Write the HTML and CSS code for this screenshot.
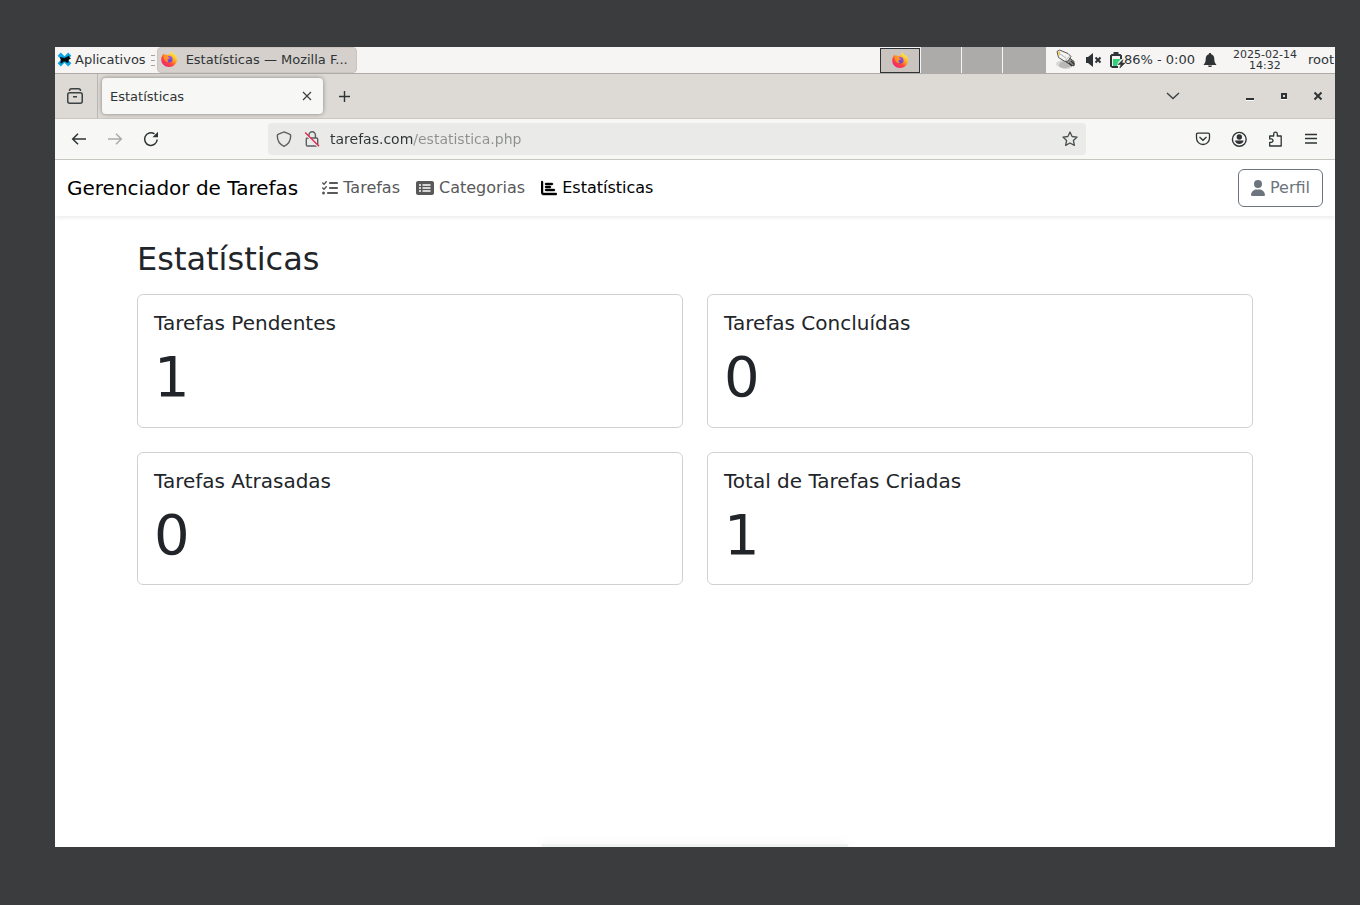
FILE: index.html
```html
<!DOCTYPE html>
<html lang="pt-BR">
<head>
<meta charset="utf-8">
<title>Estatísticas</title>
<link rel="stylesheet" href="styles.css">
</head>
<body>
<svg class="defs" aria-hidden="true">
  <defs>
    <linearGradient id="ff-body" x1="0.85" y1="0.1" x2="0.2" y2="0.95">
      <stop offset="0.1" stop-color="#ffe63c"/><stop offset="0.4" stop-color="#ffa022"/><stop offset="0.65" stop-color="#ff4a3c"/><stop offset="1" stop-color="#f0207a"/>
    </linearGradient>
    <linearGradient id="ff-core" x1="0.7" y1="0" x2="0.3" y2="1">
      <stop offset="0" stop-color="#a050e8"/><stop offset="1" stop-color="#5b44c4"/>
    </linearGradient>
    <symbol id="firefox" viewBox="0 0 16 16">
      <path fill="url(#ff-body)" d="M10 .2c1 .6 1.5 1.4 1.8 2.3.7.3 1 .8 1.3 1.4.1-.3 0-.7 0-1C15 4.300 16 6.300 16 8.500 16 12.800 12.500 16 8.100 16 3.700 16 .2 12.700.2 8.500c0-2 .7-3.500 1.500-4.500 0-.7.2-1.200.5-1.600.3.600.8.900 1.300 1.200 1.500-.400 2.300 0 3.200.6C8 3.700 9.600 2.700 10 .2z"/>
      <circle cx="8.200" cy="8.300" r="3.300" fill="url(#ff-core)"/>
      <path fill="#ff9425" d="M2.500 5.200c1.200-1 2.900-1.200 4.200-.6.500 0 1-.1 1.400-.1-.8.500-1.300 1-1.300 1.600.5.500 1.300.4 2 .8-.4.900-1.800 1-2.200 1.700-.3.900.3 1.900 1.300 2.400-2.400.4-4.600-1.200-5.400-5.800z"/>
    </symbol>
  </defs>
</svg>

<div class="screen">
  <header class="panel">
    <button class="apps" type="button">
      <svg width="15" height="15" viewBox="0 0 15 15" aria-hidden="true"><path d="M2.200 2.200l10.600 10.600M12.800 2.200L2.200 12.800" stroke="#0aa5e2" stroke-width="4.500"/><path d="M3 5l4.500 1 3.500-1.700.6-1 .9 1.900 1.500 1.200-2.300 1.400-.2 2.900H9.800L8.500 9.500 6 9.800l-.8 1.400H3.500l.3-3z" fill="#06090c"/></svg>
      Aplicativos
    </button>
    <span class="handle"></span>
    <button class="task" type="button">
      <svg class="icon16" aria-hidden="true"><use href="#firefox"/></svg>
      Estatísticas — Mozilla F...
    </button>
    <div class="pager">
      <button class="desk desk-active" type="button" aria-label="Área de trabalho 1"><svg class="icon16" aria-hidden="true"><use href="#firefox"/></svg></button>
      <button class="desk" type="button" aria-label="Área de trabalho 2"></button>
      <button class="desk" type="button" aria-label="Área de trabalho 3"></button>
      <button class="desk desk-last" type="button" aria-label="Área de trabalho 4"></button>
    </div>
    <div class="tray">
      <svg width="22" height="22" viewBox="0 0 22 22" aria-hidden="true"><ellipse cx="9" cy="15" rx="8" ry="4" fill="#000" opacity=".12"/><ellipse cx="11" cy="16" rx="7" ry="4" fill="#000" opacity=".14"/><path d="M12 10l2-1.500 5 4V17l-3-1-5-3z" fill="#8d8d8b" stroke="#4a4d49"/><path d="M14 14l3 3M16 12l3.500 3.500" stroke="#333" stroke-width="1.200"/><path d="M2 2.500L4.500 1 13 4.500l3 3-3 4.500-3 .5-6.500-4z" fill="#f2f2f0" stroke="#555753"/><path d="M10 11.500L14.500 7.500M5 5l6 4" stroke="#b5b5b2" fill="none"/><path d="M3 3.500L5 2v3l-1 2z" fill="#f4c04a"/></svg>
      <svg width="16" height="16" viewBox="0 0 16 16" aria-hidden="true"><path d="M1 5h2l5-4v14l-5-4H1z" fill="#2e3436"/><path d="M10.500 5.500l5 5M15.500 5.500l-5 5" stroke="#2e3436" stroke-width="2"/></svg>
      <span class="battery">
        <svg width="16" height="16" viewBox="0 0 16 16" aria-hidden="true"><path d="M3 7v7h4l1-3.500L11 7z" fill="#33d17a"/><path d="M8 15H2.500L1 14V4l1-1h8l1 1v3" fill="none" stroke="#2e3436" stroke-width="2"/><path d="M3.500 0h5v3h-5z" fill="#2e3436"/><path d="M13 7.500L8 12.500h3L9.500 16.500l5.500-5.500h-3z" fill="#2e3436" stroke="#2e3436" stroke-width=".5"/></svg>
        <span>86% - 0:00</span>
      </span>
      <svg width="14" height="16" viewBox="0 0 14 16" aria-hidden="true"><path d="M7 1c.8 0 1.200.5 1.200 1.200C10.500 2.800 11.300 5 11.300 7c0 3 .7 4 2 5.500V13H.7v-.5C2 11 2.700 10 2.700 7c0-2 .8-4.200 3.100-4.800C5.800 1.500 6.200 1 7 1zM5 13.500h4c0 1-1 1.500-2 1.500s-2-.5-2-1.500z" fill="#2e3436"/></svg>
      <time class="clock" datetime="2025-02-14T14:32">2025-02-14<br>14:32</time>
      <span>root</span>
    </div>
  </header>

  <div class="tabbar">
    <button class="view" type="button" aria-label="Firefox View"><svg width="18" height="18" viewBox="0 0 18 18" aria-hidden="true"><rect x="1.750" y="5.750" width="14.500" height="10.500" rx="2" fill="none" stroke="#3b4042" stroke-width="1.500"/><path d="M3.500 4C3.500 2.500 4 1.800 5.500 1.800h7c1.500 0 2 .7 2 2.200M7 9.700h4" fill="none" stroke="#3b4042" stroke-width="1.500"/></svg></button>
    <div class="tab">
      <span>Estatísticas</span>
      <button class="tab-close" type="button" aria-label="Fechar aba"><svg width="10" height="10" viewBox="0 0 10 10" aria-hidden="true"><path d="M1 1l8 8M9 1l-8 8" stroke="#3b4042" stroke-width="1.200"/></svg></button>
    </div>
    <button class="newtab" type="button" aria-label="Nova aba"><svg width="13" height="13" viewBox="0 0 13 13" aria-hidden="true"><path d="M6.500 1v11M1 6.500h11" stroke="#2e3436" stroke-width="1.400"/></svg></button>
    <button class="alltabs" type="button" aria-label="Listar abas"><svg width="14" height="8" viewBox="0 0 14 8" aria-hidden="true"><path d="M1 1l6 5.500L13 1" fill="none" stroke="#3b4042" stroke-width="1.400"/></svg></button>
    <div class="winbuttons">
      <button type="button" aria-label="Minimizar"><svg width="10" height="10" viewBox="0 0 10 10" aria-hidden="true"><path d="M1 7h8v2H1z" fill="#2e3436"/><path d="M1 9h8v1H1z" fill="#fff"/></svg></button>
      <button type="button" aria-label="Restaurar"><svg width="10" height="10" viewBox="0 0 10 10" aria-hidden="true"><path d="M3 3h4v4H3z" fill="none" stroke="#2e3436" stroke-width="2"/><path d="M2 8h6v1H2z" fill="#fff"/></svg></button>
      <button type="button" aria-label="Fechar"><svg width="10" height="10" viewBox="0 0 10 10" aria-hidden="true"><path d="M1.500 1.500l7 7M8.500 1.500l-7 7" stroke="#2e3436" stroke-width="2"/></svg></button>
    </div>
  </div>

  <div class="toolbar">
    <div class="tools">
      <button type="button" aria-label="Voltar"><svg width="16" height="16" viewBox="0 0 16 16" aria-hidden="true"><path d="M15 8H2M7 2.700L1.700 8 7 13.300" fill="none" stroke="#2e3436" stroke-width="1.500"/></svg></button>
      <button type="button" aria-label="Avançar" disabled><svg width="16" height="16" viewBox="0 0 16 16" aria-hidden="true"><path d="M1 8h13M9 2.700L14.300 8 9 13.300" fill="none" stroke="#aaacac" stroke-width="1.500"/></svg></button>
      <button type="button" aria-label="Recarregar"><svg width="16" height="16" viewBox="0 0 16 16" aria-hidden="true"><path d="M14.200 8.500A6.300 6.300 0 1 1 11.500 2.900" fill="none" stroke="#2e3436" stroke-width="1.500"/><path d="M15 .8v5.500H9.500z" fill="#2e3436"/></svg></button>
    </div>
    <div class="urlbar">
      <svg width="16" height="16" viewBox="0 0 16 16" aria-hidden="true"><path d="M8 .9l5.500 2.300c.8.300 1.200.8 1.200 1.600 0 5-2.200 8.500-6.700 10.500C3.500 13.300 1.300 9.800 1.300 4.800c0-.8.400-1.300 1.200-1.600z" fill="none" stroke="#5a5f61" stroke-width="1.400"/></svg>
      <svg width="16" height="16" viewBox="0 0 16 16" aria-hidden="true"><path d="M5 7V4a3.200 3.200 0 0 1 6.400 0v3M3.500 7h9c.8 0 1.200.4 1.200 1.200v5.600c0 .8-.4 1.200-1.200 1.200h-9c-.8 0-1.200-.4-1.200-1.200V8.200C2.300 7.400 2.700 7 3.500 7z" fill="none" stroke="#5a5f61" stroke-width="1.400"/><path d="M1.200 2.500l13.500 13.500" stroke="#ececeb" stroke-width="2"/><path d="M1.200 1.500L15 15.300" stroke="#e22850" stroke-width="1.400"/></svg>
      <input class="url" type="text" aria-label="Endereço" value="tarefas.com/estatistica.php" spellcheck="false">
      <button type="button" aria-label="Adicionar aos favoritos"><svg width="16" height="16" viewBox="0 0 16 16" aria-hidden="true"><path d="M8 1l2.100 4.500 5 .6-3.700 3.400 1 4.900L8 12l-4.400 2.400 1-4.900L.9 6.100l5-.6z" fill="none" stroke="#4a4f51" stroke-width="1.300" stroke-linejoin="round"/></svg></button>
    </div>
    <div class="tools tools-end">
      <button type="button" aria-label="Pocket"><svg width="16" height="16" viewBox="0 0 16 16" aria-hidden="true"><path d="M2.800 2.200h10.400c.8 0 1.300.5 1.300 1.300V7a6.500 6.500 0 0 1-13 0V3.500c0-.8.500-1.300 1.300-1.300zM4.500 6L8 9.300 11.500 6" fill="none" stroke="#2e3436" stroke-width="1.300"/></svg></button>
      <button type="button" aria-label="Conta"><svg width="16" height="16" viewBox="0 0 16 16" aria-hidden="true"><circle cx="8.300" cy="8.300" r="6.900" fill="none" stroke="#2e3436" stroke-width="1.400"/><circle cx="8.300" cy="6" r="2.700" fill="#2e3436"/><path d="M4 9.500h8.600c-.3 2-2 3.500-4.300 3.500s-4-1.500-4.300-3.500z" fill="#2e3436"/></svg></button>
      <button type="button" aria-label="Extensões"><svg width="16" height="16" viewBox="0 0 16 16" aria-hidden="true"><path d="M2.700 6.500V5h4V3a1.800 1.800 0 0 1 3.600 0v2h3.900v10H2.700v-3.700h1.600a1.700 1.700 0 0 0 0-3.400H2.700z" fill="none" stroke="#2e3436" stroke-width="1.300" stroke-linejoin="round"/></svg></button>
      <button type="button" aria-label="Menu"><svg width="16" height="16" viewBox="0 0 16 16" aria-hidden="true"><path d="M2 3.500h12M2 7.500h12M2 12h12" stroke="#2e3436" stroke-width="1.300"/></svg></button>
    </div>
  </div>

  <div class="page">
    <nav class="navbar">
      <a class="brand" href="#">Gerenciador de Tarefas</a>
      <ul class="links">
        <li><a href="#"><svg width="16" height="16" viewBox="0 0 512 512" aria-hidden="true"><path fill="currentColor" d="M152.1 38.2c9.9 8.900 10.700 24 1.800 33.900l-72 80c-4.400 4.900-10.600 7.800-17.200 7.900s-12.900-2.400-17.600-7L7 113C-2.300 103.600-2.300 88.400 7 79s24.600-9.400 33.900 0l22.100 22.100 55.100-61.200c8.900-9.900 24-10.700 33.900-1.800zm0 160c9.900 8.900 10.700 24 1.800 33.900l-72 80c-4.400 4.900-10.600 7.800-17.200 7.900s-12.900-2.400-17.600-7L7 273c-9.400-9.400-9.400-24.600 0-33.900s24.600-9.400 33.900 0l22.100 22.100 55.100-61.200c8.900-9.900 24-10.700 33.900-1.800zM224 96c0-17.700 14.300-32 32-32H480c17.700 0 32 14.300 32 32s-14.300 32-32 32H256c-17.700 0-32-14.300-32-32zm0 160c0-17.700 14.300-32 32-32H480c17.700 0 32 14.300 32 32s-14.300 32-32 32H256c-17.700 0-32-14.300-32-32zM160 416c0-17.700 14.300-32 32-32H480c17.700 0 32 14.300 32 32s-14.300 32-32 32H192c-17.700 0-32-14.300-32-32zM48 368a48 48 0 1 1 0 96 48 48 0 1 1 0-96z"/></svg>Tarefas</a></li>
        <li><a href="#"><svg width="18" height="16" viewBox="0 0 576 512" aria-hidden="true"><path fill="currentColor" fill-rule="evenodd" d="M0 96C0 60.700 28.700 32 64 32H512c35.300 0 64 28.700 64 64V416c0 35.300-28.700 64-64 64H64c-35.300 0-64-28.700-64-64V96zM128 288a32 32 0 1 0 0-64 32 32 0 1 0 0 64zm32-128a32 32 0 1 0 -64 0 32 32 0 1 0 64 0zM128 384a32 32 0 1 0 0-64 32 32 0 1 0 0 64zm96-248c-13.300 0-24 10.700-24 24s10.700 24 24 24H448c13.300 0 24-10.700 24-24s-10.700-24-24-24H224zm0 96c-13.300 0-24 10.700-24 24s10.700 24 24 24H448c13.300 0 24-10.700 24-24s-10.700-24-24-24H224zm0 96c-13.300 0-24 10.700-24 24s10.700 24 24 24H448c13.300 0 24-10.700 24-24s-10.700-24-24-24H224z"/></svg>Categorias</a></li>
        <li><a class="current" href="#" aria-current="page"><svg width="16" height="16" viewBox="0 0 512 512" aria-hidden="true"><path fill="currentColor" stroke="currentColor" stroke-width="14" d="M32 32c17.700 0 32 14.300 32 32V400c0 8.800 7.200 16 16 16H480c17.700 0 32 14.300 32 32s-14.300 32-32 32H80c-44.200 0-80-35.800-80-80V64C0 46.300 14.300 32 32 32zm96 96c0-17.700 14.300-32 32-32l192 0c17.700 0 32 14.300 32 32s-14.300 32-32 32H160c-17.700 0-32-14.300-32-32zm32 64H288c17.700 0 32 14.300 32 32s-14.300 32-32 32H160c-17.700 0-32-14.300-32-32s14.300-32 32-32zm0 96H416c17.700 0 32 14.300 32 32s-14.300 32-32 32H160c-17.700 0-32-14.300-32-32s14.300-32 32-32z"/></svg>Estatísticas</a></li>
      </ul>
      <button class="profile" type="button"><svg width="14" height="16" viewBox="0 0 448 512" aria-hidden="true"><path fill="currentColor" d="M224 256A128 128 0 1 0 224 0a128 128 0 1 0 0 256zm-45.700 48C79.800 304 0 383.800 0 482.300C0 498.700 13.300 512 29.700 512H418.300c16.400 0 29.700-13.300 29.700-29.700C448 383.800 368.200 304 269.700 304H178.300z"/></svg>Perfil</button>
    </nav>

    <main class="container">
      <h1>Estatísticas</h1>
      <div class="cards">
        <section class="card"><h2>Tarefas Pendentes</h2><p>1</p></section>
        <section class="card"><h2>Tarefas Concluídas</h2><p>0</p></section>
        <section class="card"><h2>Tarefas Atrasadas</h2><p>0</p></section>
        <section class="card"><h2>Total de Tarefas Criadas</h2><p>1</p></section>
      </div>
    </main>
    <div class="dock"></div>
  </div>
</div>
</body>
</html>
```
FILE: styles.css
```css
* { box-sizing: border-box; }

body {
  margin: 0;
  min-height: 100vh;
  padding: 47px 25px 58px 55px;
  display: flex;
  background: #3b3c3e;
  font-family: "DejaVu Sans", sans-serif;
  font-size: 13px;
  color: #2e3436;
}

button {
  display: flex;
  align-items: center;
  justify-content: center;
  border: 0;
  padding: 0;
  background: none;
  font: inherit;
  color: inherit;
}

svg { flex: none; display: block; }
.defs { position: absolute; width: 0; height: 0; }
.icon16 { width: 16px; height: 16px; }

.screen {
  flex: 1;
  min-width: 0;
  display: flex;
  flex-direction: column;
  background: #fff;
  overflow: hidden;
}

/* Desktop panel */
.panel {
  display: flex;
  align-items: stretch;
  height: 27px;
  background: #f6f5f4;
  border-bottom: 1px solid #aeaaa7;
  white-space: nowrap;
}
.apps { gap: 3px; padding: 0 5px 1px 2px; }
.handle {
  align-self: center;
  width: 4px;
  height: 11px;
  margin-right: 2px;
  background: repeating-linear-gradient(#a5a3a1 0 1px, transparent 1px 5px);
}
.task {
  justify-content: flex-start;
  gap: 9px;
  width: 200px;
  padding: 0 3px 2px;
  background: #d5d0cc;
  border: 1px solid #cbc5c1;
  border-radius: 4px;
}
.pager {
  display: flex;
  gap: 1px;
  margin-left: auto;
}
.desk { width: 40px; background: #adaba9; }
.desk-active {
  margin-top: 1px;
  padding-bottom: 2px;
  background: #c9c4bf;
  border: 1px solid #2e3436;
}
.desk-last { width: 43px; }
.tray {
  display: flex;
  align-items: center;
  gap: 8px;
  padding: 0 1px 1px 9px;
}
.battery { display: flex; align-items: center; margin-left: 1px; }
.battery span { margin-left: -2px; }
.clock {
  padding: 0 3px 0 8px;
  font-size: 11px;
  line-height: 11px;
  text-align: center;
}

/* Tab strip */
.tabbar {
  display: flex;
  align-items: center;
  height: 45px;
  background: #dddad5;
  border-bottom: 1px solid #c9c6c0;
}
.view {
  align-self: stretch;
  width: 43px;
  padding-right: 3px;
  border-right: 1px solid #bab6b1;
}
.tab {
  display: flex;
  align-items: center;
  justify-content: space-between;
  width: 221px;
  height: 36px;
  margin: 0 11px 0 4px;
  padding: 0 7px 0 8px;
  background: #f7f7f5;
  border-radius: 4px;
  box-shadow: 0 0 4px rgba(0, 0, 0, .4);
}
.tab-close { width: 18px; height: 18px; }
.newtab { width: 20px; height: 32px; }
.alltabs { width: 32px; height: 32px; margin-left: auto; }
.winbuttons {
  display: flex;
  gap: 24px;
  margin: 0 12px 0 56px;
}

/* Navigation toolbar */
.toolbar {
  display: flex;
  align-items: center;
  height: 41px;
  background: #f7f7f5;
  border-bottom: 1px solid #c9c6c0;
}
.tools { display: flex; padding: 0 0 0 6px; }
.tools button { width: 36px; height: 32px; }
.tools-end { padding: 0 6px 0 0; }
.urlbar {
  flex: 1;
  display: flex;
  align-items: center;
  gap: 12px;
  max-width: 818px;
  height: 32px;
  margin: 0 auto;
  padding: 0 8px;
  background: #eaeae8;
  border-radius: 4px;
}
.url {
  flex: 1;
  min-width: 0;
  margin-left: -2px;
  padding: 0;
  border: 0;
  outline: 0;
  font: inherit;
  font-size: 14px;
  color: transparent;
  background: linear-gradient(90deg, #2e3436 83px, #8e9090 83px);
  background-clip: text;
}

/* Web page */
.page {
  position: relative;
  flex: 1;
  overflow: hidden;
  font-size: 16px;
  line-height: 1.5;
  color: #212529;
}
.navbar {
  display: flex;
  align-items: center;
  padding: 8px 12px;
  box-shadow: 0 2px 4px rgba(0, 0, 0, .075);
}
.brand {
  margin-right: 16px;
  font-size: 20px;
  color: #000;
  text-decoration: none;
}
.links {
  display: flex;
  flex: 1;
  margin: 0;
  padding: 0;
  list-style: none;
}
.links a {
  display: flex;
  align-items: center;
  gap: 5px;
  padding: 8px;
  color: #595959;
  text-decoration: none;
}
.links .current { color: #000; }
.profile {
  gap: 5px;
  padding: 6px 12px;
  border: 1px solid #6c757d;
  border-radius: 6px;
  color: #6c757d;
}
.container {
  max-width: 1140px;
  margin: 24px auto 0;
  padding: 0 12px;
}
h1, h2, p { margin: 0; font-weight: 400; line-height: 1.2; }
h1 { margin-bottom: 16px; font-size: 32px; }
.cards {
  display: grid;
  grid-template-columns: 1fr 1fr;
  gap: 24px;
}
.card {
  padding: 16px;
  border: 1px solid #d0d1d2;
  border-radius: 6px;
}
.card h2 { margin-bottom: 8px; font-size: 20px; }
.card p { font-size: 56px; }

/* Top edge of the auto-hidden dock, over the page */
.dock {
  position: absolute;
  left: 50%;
  bottom: 0;
  width: 306px;
  height: 3px;
  transform: translateX(-50%);
  background: #f0f2f1;
  box-shadow: 0 2px 12px rgba(0, 0, 0, .15);
}
```
